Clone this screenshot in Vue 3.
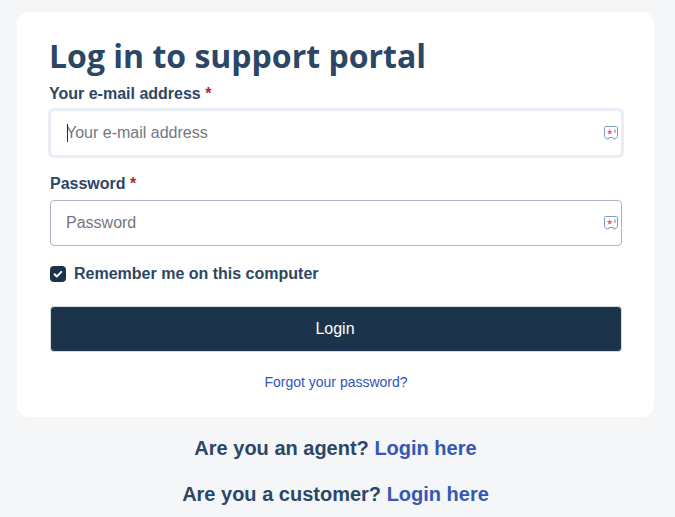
<script setup>
import { ref } from 'vue'

const email = ref('')
const password = ref('')
const remember = ref(true)
</script>

<template>
  <div class="page">
    <div class="card">
      <h1 class="title">Log in to support portal</h1>

      <label class="label">Your e-mail address <span class="req">*</span></label>
      <div class="field focused">
        <input v-model="email" class="input" type="text" placeholder="Your e-mail address" />
        <span class="caret"></span>
        <svg class="lp" viewBox="0 0 14 14" width="14" height="14">
          <path d="M1.500.5h11a1 1 0 0 1 1 1v9a1 1 0 0 1-1 1h-.5l-.5 1.500H9.500L9 11.500H5l-.5 1.500H2.500L2 11.500h-.5a1 1 0 0 1-1-1v-9a1 1 0 0 1 1-1z" fill="#fff" stroke="#7f9ccd"/>
          <path d="M5.800 3l.8 1.900 2 .2-1.500 1.300.5 2-1.800-1-1.800 1 .5-2L3 5.100l2-.2z" fill="#e8666e"/>
          <path d="M11 3.500v3.500" stroke="#6a86b5"/>
        </svg>
      </div>

      <label class="label second">Password <span class="req">*</span></label>
      <div class="field">
        <input v-model="password" class="input" type="password" placeholder="Password" />
        <svg class="lp" viewBox="0 0 14 14" width="14" height="14">
          <path d="M1.500.5h11a1 1 0 0 1 1 1v9a1 1 0 0 1-1 1h-.5l-.5 1.500H9.500L9 11.500H5l-.5 1.500H2.500L2 11.500h-.5a1 1 0 0 1-1-1v-9a1 1 0 0 1 1-1z" fill="#fff" stroke="#7f9ccd"/>
          <path d="M5.800 3l.8 1.900 2 .2-1.500 1.300.5 2-1.800-1-1.800 1 .5-2L3 5.100l2-.2z" fill="#e8666e"/>
          <path d="M11 3.500v3.500" stroke="#6a86b5"/>
        </svg>
      </div>

      <label class="remember">
        <span class="check" @click.prevent="remember = !remember">
          <svg v-if="remember" viewBox="0 0 16 16" width="16" height="16">
            <path d="M4.500 8.300l2.300 2.200 4.500-4.600" fill="none" stroke="#fff" stroke-width="2" stroke-linecap="round" stroke-linejoin="round"/>
          </svg>
        </span>
        Remember me on this computer
      </label>

      <button class="login" type="button">Login</button>

      <a class="forgot" href="#">Forgot your password?</a>
    </div>

    <p class="alt">Are you an agent? <a href="#">Login here</a></p>
    <p class="alt">Are you a customer? <a href="#">Login here</a></p>
  </div>
</template>

<style scoped>
.page {
  height: 517px;
  overflow: hidden;
  box-sizing: border-box;
  padding: 12px 21px 0 17px;
  background: #f4f6f8;
  font-family: "Liberation Sans", Arial, sans-serif;
  color: #2c4766;
}

.card {
  display: flex;
  flex-direction: column;
  height: 405px;
  box-sizing: border-box;
  padding: 24px 32px 0 33px;
  background: #fff;
  border-radius: 12px;
}

.title {
  margin: 0 0 0 -1px;
  font-family: "Open Sans", sans-serif;
  font-size: 32px;
  line-height: 40px;
  font-weight: 700;
  color: #2c4766;
}

.label {
  margin-top: 10px;
  margin-left: -1px;
  font-size: 16px;
  line-height: 16px;
  font-weight: 700;
}

.label.second {
  margin-top: 18px;
  margin-left: 0;
}

.req {
  color: #b3262b;
}

.field {
  position: relative;
  height: 46px;
  margin-top: 8px;
  box-sizing: border-box;
  border: 1px solid #aab6c6;
  border-radius: 4px;
  background: #fff;
}

.field.focused {
  height: 50px;
  margin: 6px -2px 0;
  border: 3px solid #e9edf4;
  border-radius: 6px;
}

.input {
  display: block;
  width: 100%;
  height: 100%;
  box-sizing: border-box;
  padding: 0 40px 0 15px;
  border: 0;
  outline: 0;
  background: transparent;
  font-family: "Liberation Sans", Arial, sans-serif;
  font-size: 16px;
  color: #2c4766;
}

.input::placeholder {
  color: #73787f;
  opacity: 1;
}

.caret {
  position: absolute;
  left: 16px;
  top: 13px;
  width: 1px;
  height: 18px;
  background: #1b3148;
}

.lp {
  position: absolute;
  right: 3px;
  top: 50%;
  margin-top: -7px;
}

.remember {
  display: flex;
  align-items: center;
  gap: 8px;
  margin-top: 19px;
  font-size: 16px;
  line-height: 18px;
  font-weight: 700;
}

.check {
  display: block;
  width: 16px;
  height: 16px;
  border-radius: 4px;
  background: #1c334c;
}

.check svg {
  display: block;
}

.login {
  height: 46px;
  margin-top: 23px;
  padding: 0 2px 0 0;
  border: 1px solid #d5dbe3;
  border-radius: 4px;
  background: #1c334c;
  color: #fff;
  font-family: "Liberation Sans", Arial, sans-serif;
  font-size: 16px;
  font-weight: 400;
}

.forgot {
  margin-top: 22px;
  text-align: center;
  font-size: 14px;
  line-height: 16px;
  color: #2f55b8;
  text-decoration: none;
}

.alt {
  margin: 18px 0 0;
  text-align: center;
  font-size: 20px;
  line-height: 27px;
  font-weight: 700;
}

.alt + .alt {
  margin-top: 19px;
}

.alt a {
  color: #3558b5;
  text-decoration: none;
}
</style>
